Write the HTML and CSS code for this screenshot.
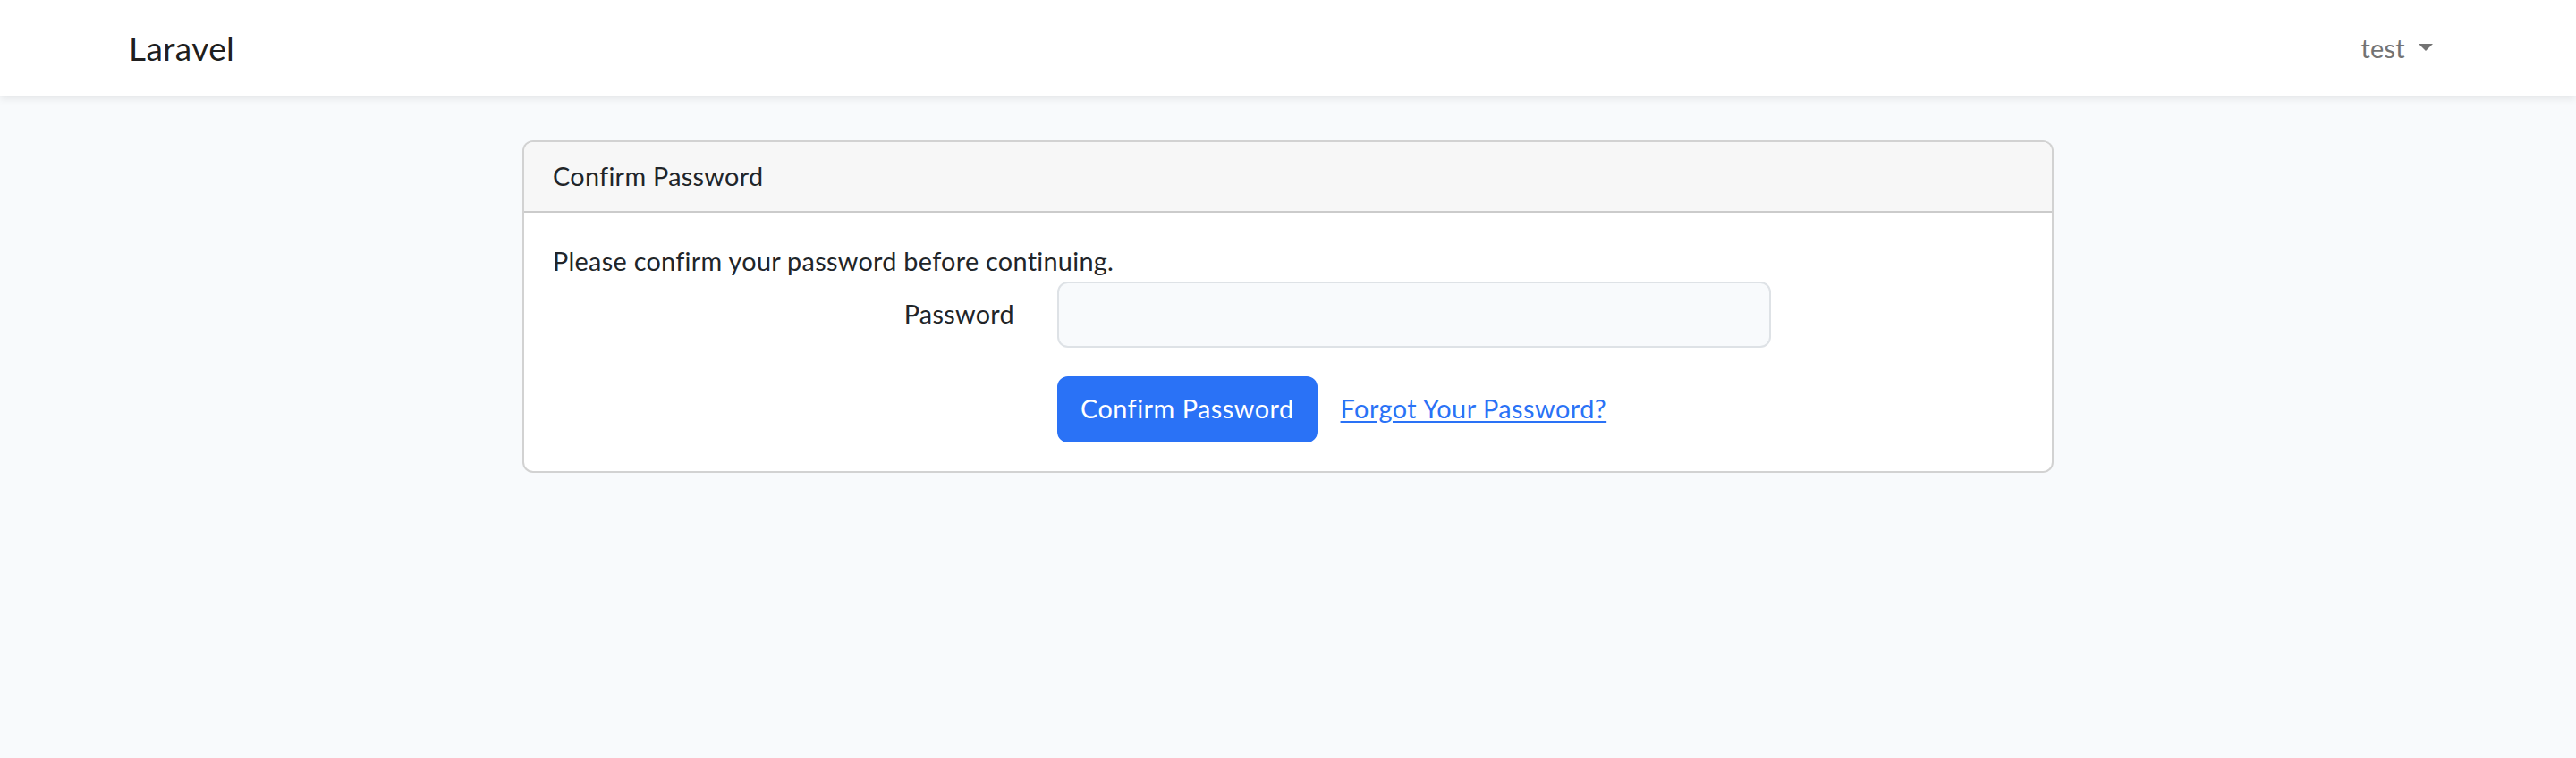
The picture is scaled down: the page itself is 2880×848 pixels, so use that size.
FILE: index.html
```html
<!DOCTYPE html>
<html lang="en">
<head>
<meta charset="utf-8">
<title>Laravel</title>
<link rel="stylesheet" href="styles.css">
</head>
<body>
<nav class="navbar">
  <div class="container nav-inner">
    <a class="brand" href="#">Laravel</a>
    <a class="nav-link dropdown-toggle" href="#">test</a>
  </div>
</nav>
<main class="main">
  <div class="container">
    <div class="row-center">
      <div class="card">
        <div class="card-header">Confirm Password</div>
        <div class="card-body">
          <p class="intro">Please confirm your password before continuing.</p>
          <form class="form">
            <div class="form-row">
              <label class="form-label" for="password">Password</label>
              <div class="form-field">
                <input id="password" type="password" class="form-control">
              </div>
            </div>
            <div class="form-row last">
              <div class="form-actions">
                <button type="button" class="btn btn-primary">Confirm Password</button>
                <a class="btn btn-link" href="#">Forgot Your Password?</a>
              </div>
            </div>
          </form>
        </div>
      </div>
    </div>
  </div>
</main>
</body>
</html>
```
FILE: styles.css
```css
* { box-sizing: border-box; }
html, body { margin: 0; padding: 0; }
body {
  background: #f8fafc;
  color: #212529;
  font-family: Lato, "Liberation Sans", sans-serif;
  font-size: 28.8px;
  line-height: 1.6;
  letter-spacing: 0.3px;
}
.container {
  width: 2640px;
  margin: 0 auto;
  padding: 0 24px;
}
.navbar {
  background: #fff;
  box-shadow: 0 4px 8px rgba(0, 0, 0, 0.075);
  padding: 16px 0;
  position: relative;
}
.nav-inner {
  display: flex;
  justify-content: space-between;
  align-items: center;
  height: 75px;
}
.brand {
  font-size: 37px;
  letter-spacing: 0.4px;
  line-height: 57.6px;
  color: rgba(0, 0, 0, 0.9);
  text-decoration: none;
}
.nav-link {
  color: #737373;
  text-decoration: none;
  padding: 0 16px;
  line-height: 46px;
}
.dropdown-toggle::after {
  content: "";
  display: inline-block;
  margin-left: 15px;
  vertical-align: 7.3px;
  border-top: 8.6px solid;
  border-left: 8.6px solid transparent;
  border-right: 8.6px solid transparent;
}
.main {
  padding: 50px 0 48px;
}
.row-center {
  display: flex;
  justify-content: center;
}
.card {
  width: 1712px;
  background: #fff;
  border: 2px solid rgba(0, 0, 0, 0.175);
  border-radius: 12px;
  overflow: hidden;
}
.card-header {
  background: #f7f7f7;
  padding: 15px 32px 16px;
  line-height: 46px;
  border-bottom: 2px solid rgba(0, 0, 0, 0.175);
}
.card-body {
  padding: 31px 32px 32px;
}
.intro {
  margin: 0;
  line-height: 46px;
}
.form-row {
  display: grid;
  grid-template-columns: 564px 846px;
  margin: 0 -24px 32px;
}
.form-row.last {
  margin-bottom: 0;
}
.form-label {
  padding: 13px 24px 15px;
  text-align: right;
  line-height: 46px;
}
.form-field {
  padding: 0 24px;
}
.form-control {
  display: block;
  width: 100%;
  height: 74px;
  padding: 12px 24px;
  font: inherit;
  line-height: 46px;
  background: #f8fafc;
  border: 2px solid #dee2e6;
  border-radius: 12px;
  color: #212529;
}
.form-actions {
  grid-column: 2;
  padding: 0 24px;
  display: flex;
  align-items: center;
}
.btn {
  display: inline-block;
  font: inherit;
  letter-spacing: 0.5px;
  line-height: 46px;
  padding: 11px 24px 13px;
  border: 2px solid transparent;
  border-radius: 12px;
  cursor: pointer;
}
.btn-primary {
  background: #2a72f6;
  border-color: #2a72f6;
  color: #fff;
}
.btn-link {
  color: #2a72f6;
  text-decoration: underline;
  text-underline-offset: 3px;
}
```
